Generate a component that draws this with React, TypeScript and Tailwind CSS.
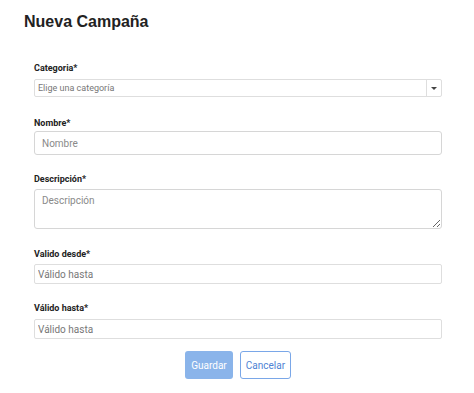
export default function App() {
    const label = "block h-[12px] text-[9px] leading-[12px] font-bold text-[#222]"
    const font = { fontFamily: "Roboto, 'Liberation Sans', sans-serif" }

    return (
        <div className="w-[474px] h-[393px] bg-white relative" style={font}>
            <h1 className="pl-[24px] pt-[12px] h-[30px] text-[16px] leading-[20px] font-bold text-[#222]" style={{ fontFamily: "'Liberation Sans', Arial, sans-serif" }}>
                Nueva Campaña
            </h1>
            <form className="flex flex-col pl-[34px] w-[442px]">
                <label className={`${label} mt-[32px]`}>Categoria*</label>
                <div className="mt-[5px] h-[18px] flex border border-[#dedede] rounded-[2px]">
                    <div className="flex-1 pl-[3px] text-[9px] leading-[16px] text-[#777]">Elige una categoría</div>
                    <div className="w-[15px] border-l border-[#dedede] flex items-center justify-center">
                        <div className="w-0 h-0 border-l-[3px] border-r-[3px] border-t-[3px] border-l-transparent border-r-transparent border-t-[#444]"></div>
                    </div>
                </div>

                <label className={`${label} mt-[20px]`}>Nombre*</label>
                <input
                    className="mt-[2px] h-[24px] border border-[#d6d6d6] rounded-[3px] px-[7px] text-[10px] placeholder:text-[#8a8a8a] outline-none"
                    placeholder="Nombre"
                />

                <label className={`${label} mt-[18px]`}>Descripción*</label>
                <textarea
                    className="mt-[4px] h-[40px] border border-[#d6d6d6] rounded-[3px] px-[7px] pt-[3px] text-[10px] placeholder:text-[#8a8a8a] outline-none resize-y"
                    placeholder="Descripción"
                />

                <label className={`${label} mt-[19px]`}>Valido desde*</label>
                <input
                    className="mt-[4px] h-[20px] border border-[#dedede] rounded-[2px] px-[3px] text-[10px] placeholder:text-[#777] outline-none"
                    placeholder="Válido hasta"
                />

                <label className={`${label} mt-[18px]`}>Válido hasta*</label>
                <input
                    className="mt-[5px] h-[20px] border border-[#dedede] rounded-[2px] px-[3px] text-[10px] placeholder:text-[#777] outline-none"
                    placeholder="Válido hasta"
                />

                <div className="mt-[12px] flex justify-center gap-[7px]">
                    <button type="button" className="w-[48px] h-[28px] rounded-[3px] bg-[#8ab4ea] text-white text-[10px]">
                        Guardar
                    </button>
                    <button type="button" className="w-[51px] h-[28px] rounded-[3px] bg-white border border-[#7aa7e8] text-[#4f82d4] text-[10px]">
                        Cancelar
                    </button>
                </div>
            </form>
        </div>
    )
}
